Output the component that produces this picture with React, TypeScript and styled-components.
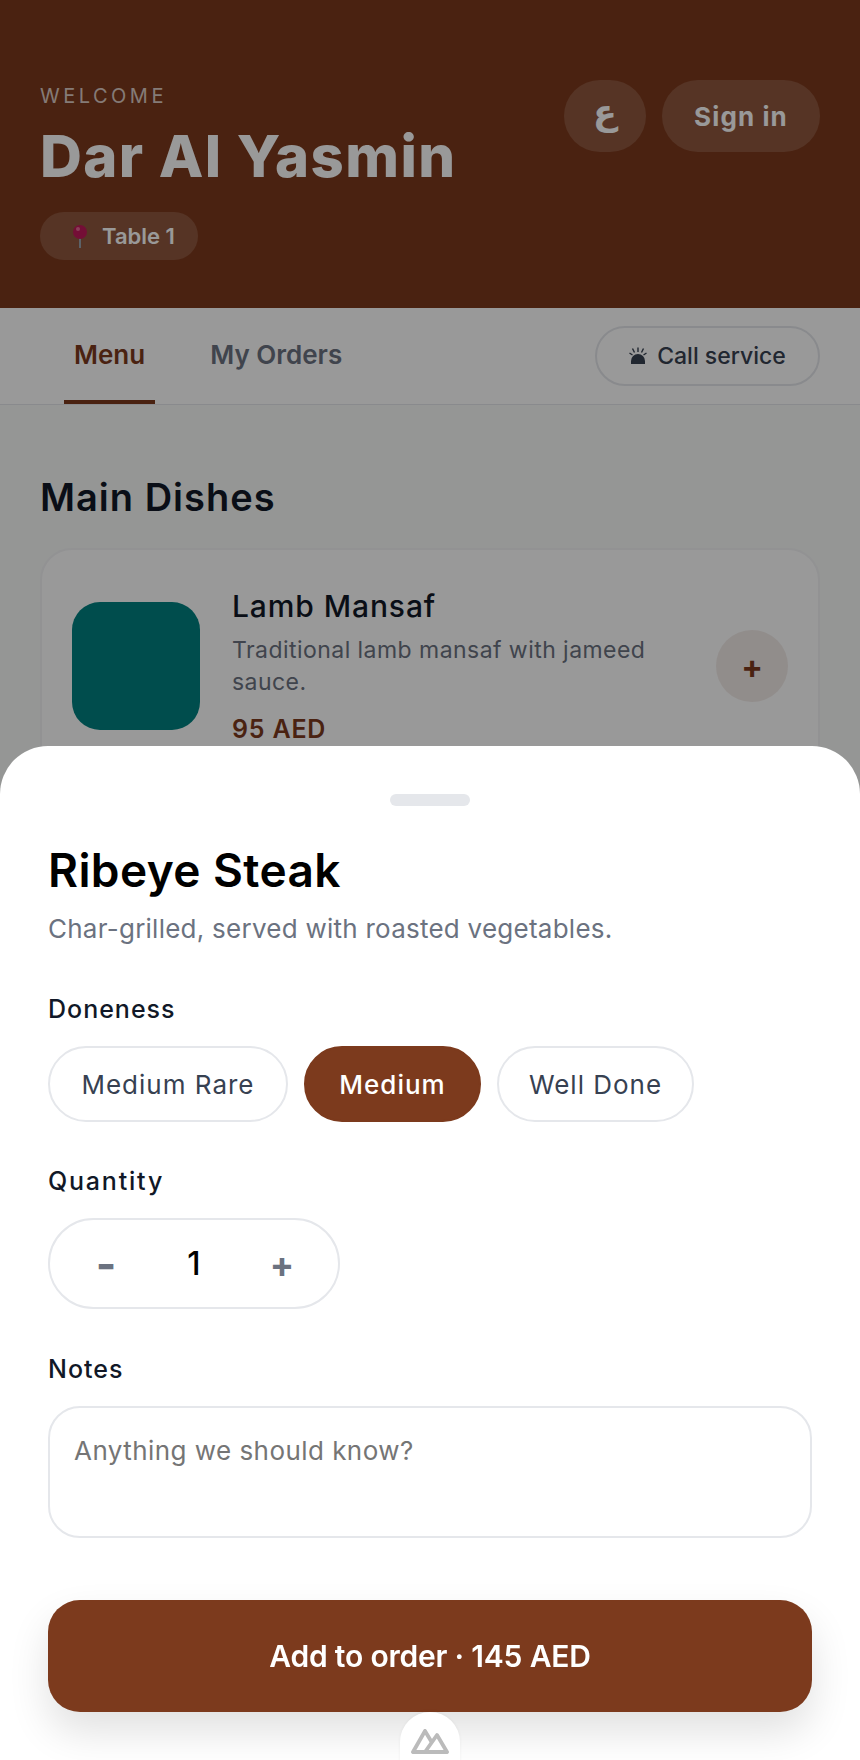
import React from 'react'
import styled, {createGlobalStyle} from 'styled-components'

const Global = createGlobalStyle`
  html, body {
    margin: 0;
    padding: 0;
    background: #f8faf8;
  }
  * {
    box-sizing: border-box;
  }
  body {
    font-family: 'Inter', 'Liberation Sans', sans-serif;
  }
`

const Page = styled.div`
  width: 860px;
  height: 1760px;
  overflow: hidden;
  background: #f8faf8;
`

const Hero = styled.header`
  height: 308px;
  padding: 80px 40px 0;
  background: #7c3a1d;
  display: flex;
  justify-content: space-between;
  align-items: flex-start;
`

const HeroText = styled.div`
  display: flex;
  flex-direction: column;
  align-items: flex-start;
`

const Welcome = styled.div`
  font-size: 20px;
  line-height: 32px;
  letter-spacing: 3.5px;
  color: rgba(255, 255, 255, 0.75);
`

const Brand = styled.h1`
  margin: 10px 0 0;
  font-size: 58px;
  line-height: 68px;
  font-weight: 800;
  letter-spacing: 1.4px;
  color: #fff;
`

const TablePill = styled.div`
  margin-top: 22px;
  height: 48px;
  width: 158px;
  padding-left: 30px;
  border-radius: 24px;
  background: rgba(255, 255, 255, 0.15);
  display: flex;
  align-items: center;
  gap: 12px;
  font-size: 22px;
  font-weight: 600;
  color: #fff;
`

const HeroActions = styled.div`
  display: flex;
  gap: 16px;
`

const GhostButton = styled.button`
  width: 158px;
  height: 72px;
  border: none;
  border-radius: 36px;
  background: rgba(255, 255, 255, 0.15);
  color: #fff;
  font-family: inherit;
  font-size: 26px;
  font-weight: 700;
  letter-spacing: 1.1px;
`

const LangButton = styled(GhostButton)`
  width: 82px;
  padding-bottom: 10px;
  font-family: 'DejaVu Sans', sans-serif;
  font-size: 35px;
  letter-spacing: 0;
`

const Tabs = styled.nav`
  height: 97px;
  padding: 0 40px 0 64px;
  background: #fff;
  border-bottom: 1px solid #e5e7eb;
  display: flex;
  align-items: center;
  justify-content: space-between;
`

const TabList = styled.div`
  display: flex;
  gap: 45px;
  align-self: stretch;
`

const Tab = styled.button<{$active?: boolean}>`
  height: 100%;
  padding: 0 10px;
  border: none;
  border-bottom: 4px solid ${({$active}) => ($active ? '#7c3a1d' : 'transparent')};
  background: none;
  font-family: inherit;
  font-size: 26px;
  font-weight: 600;
  color: ${({$active}) => ($active ? '#7c3a1d' : '#6b7280')};
`

const CallButton = styled.button`
  width: 225px;
  height: 60px;
  border: 2px solid #e5e7eb;
  border-radius: 30px;
  background: #fff;
  display: flex;
  align-items: center;
  justify-content: center;
  gap: 10px;
  font-family: inherit;
  font-size: 23px;
  font-weight: 500;
  color: #374151;
`

const Content = styled.main`
  padding: 70px 40px 0;
`

const SectionTitle = styled.h2`
  margin: 0 0 29px;
  font-size: 38px;
  line-height: 44px;
  font-weight: 600;
  letter-spacing: 1px;
  color: #111827;
`

const DishCard = styled.article`
  height: 260px;
  padding: 52px 30px 0;
  border: 2px solid #f3f4f6;
  border-radius: 32px;
  background: #fff;
  display: flex;
  gap: 32px;
`

const DishImage = styled.div`
  flex: none;
  width: 128px;
  height: 128px;
  border-radius: 28px;
  background: #008080;
`

const DishBody = styled.div`
  flex: 1;
  margin-top: -16px;
`

const DishName = styled.h3`
  margin: 0;
  font-size: 30px;
  line-height: 40px;
  font-weight: 500;
  letter-spacing: 0.9px;
  color: #111827;
`

const DishText = styled.p`
  margin: 8px 0 14px;
  width: 440px;
  font-size: 23px;
  line-height: 32px;
  letter-spacing: 0.45px;
  color: #6b7280;
`

const DishPrice = styled.div`
  font-size: 25px;
  line-height: 34px;
  font-weight: 600;
  letter-spacing: 0.8px;
  color: #7c3a1d;
`

const AddButton = styled.button`
  flex: none;
  align-self: flex-start;
  margin-top: 28px;
  width: 72px;
  height: 72px;
  border: none;
  border-radius: 50%;
  background: rgba(124, 58, 29, 0.1);
  color: #7c3a1d;
  font-family: inherit;
  font-size: 32px;
  font-weight: 700;
`

const Scrim = styled.div`
  position: fixed;
  inset: 0;
  background: rgba(0, 0, 0, 0.4);
  display: flex;
  align-items: flex-end;
`

const Sheet = styled.section`
  position: relative;
  width: 100%;
  height: 1014px;
  padding: 48px 48px 0;
  border-radius: 48px 48px 0 0;
  background: #fff;
  display: flex;
  flex-direction: column;
`

const Handle = styled.div`
  align-self: center;
  width: 80px;
  height: 12px;
  border-radius: 6px;
  background: #e5e7eb;
`

const SheetTitle = styled.h2`
  margin: 34px 0 0;
  font-size: 46px;
  line-height: 60px;
  font-weight: 600;
  letter-spacing: 0.4px;
  color: #000;
`

const SheetText = styled.p`
  margin: 11px 0 0;
  font-size: 26px;
  line-height: 36px;
  letter-spacing: 0.25px;
  color: #6b7280;
`

const FieldLabel = styled.div<{$top: number; $spacing: number}>`
  margin-top: ${({$top}) => $top}px;
  font-size: 25px;
  line-height: 34px;
  font-weight: 500;
  letter-spacing: ${({$spacing}) => $spacing}px;
  color: #111827;
`

const OptionRow = styled.div`
  margin-top: 20px;
  display: flex;
  gap: 16px;
`

const Option = styled.button<{$selected?: boolean; $width: number}>`
  width: ${({$width}) => $width}px;
  height: 76px;
  border: 2px solid ${({$selected}) => ($selected ? '#7c3a1d' : '#e5e7eb')};
  border-radius: 38px;
  background: ${({$selected}) => ($selected ? '#7c3a1d' : '#fff')};
  color: ${({$selected}) => ($selected ? '#fff' : '#374151')};
  font-family: inherit;
  font-size: 26px;
  font-weight: ${({$selected}) => ($selected ? 500 : 400)};
  letter-spacing: 1px;
`

const Stepper = styled.div`
  margin-top: 20px;
  width: 292px;
  height: 91px;
  border: 2px solid #e5e7eb;
  border-radius: 46px;
  display: flex;
  align-items: center;
  justify-content: center;
  gap: 44px;
`

const StepButton = styled.button<{$size: number}>`
  width: 48px;
  padding: 0;
  border: none;
  background: none;
  color: #6b7280;
  font-family: inherit;
  font-size: ${({$size}) => $size}px;
  font-weight: 700;
  line-height: 48px;
`

const StepValue = styled.span`
  width: 40px;
  text-align: center;
  font-size: 32px;
  font-weight: 500;
  color: #000;
`

const Notes = styled.textarea`
  margin-top: 20px;
  width: 100%;
  height: 132px;
  padding: 27px 24px;
  border: 2px solid #e5e7eb;
  border-radius: 32px;
  resize: none;
  outline: none;
  font-family: inherit;
  font-size: 26px;
  line-height: 32px;
  letter-spacing: 0.45px;
  &::placeholder {
    color: #757575;
  }
`

const SubmitButton = styled.button`
  margin-top: 62px;
  width: 100%;
  height: 112px;
  border: none;
  border-radius: 32px;
  background: #7c3a1d;
  box-shadow: 0 20px 40px rgba(0, 0, 0, 0.12);
  color: #fff;
  font-family: inherit;
  font-size: 30px;
  font-weight: 600;
  letter-spacing: -0.2px;
`

const DevTab = styled.div`
  position: absolute;
  left: 400px;
  top: 966px;
  width: 60px;
  height: 60px;
  padding-top: 16px;
  border-radius: 30px 30px 0 0;
  background: #fff;
  box-shadow: 0 0 4px rgba(0, 0, 0, 0.06);
  display: flex;
  justify-content: center;
`

const PinIcon = () => (
  <svg width="20" height="24" viewBox="0 0 20 24">
    <rect x="9" y="12" width="2" height="12" fill="#9aa3ad"/>
    <circle cx="10" cy="8" r="7" fill="#c2185b"/>
    <circle cx="8" cy="5" r="2" fill="#e76a94"/>
  </svg>
)

const BellIcon = () => (
  <svg width="18" height="18" viewBox="0 0 18 18" fill="#374151">
    <path d="M2 17v-3a7 7 0 0 1 14 0v3z"/>
    <path d="M9 .5V5M3.5 1.5l2 4M14.5 1.5l-2 4M0.5 6l3 2M17.5 6l-3 2" stroke="#374151" strokeWidth="1.4" fill="none"/>
  </svg>
)

const NuxtMark = () => (
  <svg width="38" height="27" viewBox="0 0 38 27" fill="none" stroke="#bbb" strokeWidth="3.8" strokeLinejoin="round" strokeLinecap="round">
    <path d="M14 3 2 24h12M14 3l6 10"/>
    <path d="M26 7l10 17H14z"/>
  </svg>
)

const App = () => (
  <Page>
    <Global/>
    <Hero>
      <HeroText>
        <Welcome>WELCOME</Welcome>
        <Brand>Dar Al Yasmin</Brand>
        <TablePill><PinIcon/>Table 1</TablePill>
      </HeroText>
      <HeroActions>
        <LangButton>ع</LangButton>
        <GhostButton>Sign in</GhostButton>
      </HeroActions>
    </Hero>
    <Tabs>
      <TabList>
        <Tab $active>Menu</Tab>
        <Tab>My Orders</Tab>
      </TabList>
      <CallButton><BellIcon/>Call service</CallButton>
    </Tabs>
    <Content>
      <SectionTitle>Main Dishes</SectionTitle>
      <DishCard>
        <DishImage/>
        <DishBody>
          <DishName>Lamb Mansaf</DishName>
          <DishText>Traditional lamb mansaf with jameed sauce.</DishText>
          <DishPrice>95 AED</DishPrice>
        </DishBody>
        <AddButton>+</AddButton>
      </DishCard>
    </Content>
    <Scrim>
      <Sheet>
        <Handle/>
        <SheetTitle>Ribeye Steak</SheetTitle>
        <SheetText>Char-grilled, served with roasted vegetables.</SheetText>
        <FieldLabel $top={45} $spacing={1}>Doneness</FieldLabel>
        <OptionRow>
          <Option $width={240}>Medium Rare</Option>
          <Option $width={177} $selected>Medium</Option>
          <Option $width={197}>Well Done</Option>
        </OptionRow>
        <FieldLabel $top={42} $spacing={1.8}>Quantity</FieldLabel>
        <Stepper>
          <StepButton $size={44}>-</StepButton>
          <StepValue>1</StepValue>
          <StepButton $size={36}>+</StepButton>
        </Stepper>
        <FieldLabel $top={43} $spacing={1}>Notes</FieldLabel>
        <Notes placeholder="Anything we should know?"/>
        <SubmitButton>Add to order · 145 AED</SubmitButton>
        <DevTab><NuxtMark/></DevTab>
      </Sheet>
    </Scrim>
  </Page>
)

export default App
